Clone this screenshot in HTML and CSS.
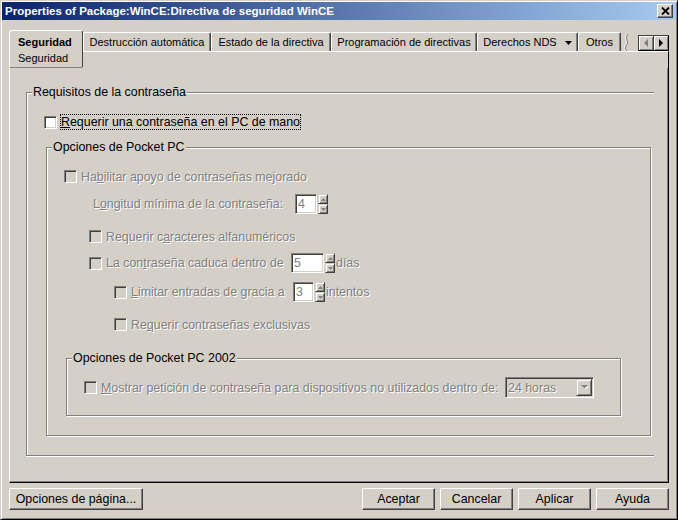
FILE: index.html
```html
<!DOCTYPE html>
<html>
<head>
<meta charset="utf-8">
<link rel="stylesheet" href="styles.css">
</head>
<body>
<div class="window">
  <div class="titlebar">
    <span class="title">Properties of Package:WinCE:Directiva de seguridad WinCE</span>
    <span class="close"><svg width="9" height="8" viewBox="0 0 9 8"><path d="M1 0.5 L8 7.5 M8 0.5 L1 7.5" stroke="#000" stroke-width="1.8" fill="none"/></svg></span>
  </div>

  <div class="tabarea">
    <div class="tab-sel">
      <div class="tab-sel-main">Seguridad</div>
      <div class="tab-sel-sub">Seguridad</div>
    </div>
    <div class="tab-rest">
      <div class="tab-row">
        <div class="tab t-dest">Destrucción automática</div>
        <div class="tab t-estado">Estado de la directiva</div>
        <div class="tab t-prog">Programación de directivas</div>
        <div class="tab t-nds">Derechos NDS<svg class="nds-arrow" width="7" height="4" viewBox="0 0 7 4"><polygon points="0,0 7,0 3.5,4" fill="#000"/></svg></div>
        <div class="tab t-otros">Otros</div>
        <div class="tab-partial"><svg width="12" height="19" viewBox="0 0 12 19"><path d="M6 1 Q3 4 5 7 Q7 10 4 13 Q2 16 5 18" stroke="#fff" stroke-width="1" fill="none"/><path d="M7 1 Q4 4 6 7 Q8 10 5 13 Q3 16 6 18" stroke="#808080" stroke-width="1" fill="none"/></svg></div>
        <div class="scroller">
          <span class="sbtn sbtn-left"><svg width="5" height="8" viewBox="0 0 5 8"><polygon points="4,0 0,4 4,8" fill="#808080"/></svg></span>
          <span class="sbtn"><svg width="5" height="8" viewBox="0 0 5 8"><polygon points="0,0 4,4 0,8" fill="#000"/></svg></span>
        </div>
      </div>
      <div class="tab-fill"></div>
    </div>
  </div>

  <div class="panel">
    <div class="group group-main">
      <div class="group-title">Requisitos de la contraseña</div>
      <div class="row row-main">
        <span class="cb"></span>
        <span class="focus"><u>R</u>equerir una contraseña en el PC de mano</span>
      </div>

      <div class="group group-ppc">
        <div class="group-title">Opciones de Pocket PC</div>

        <div class="row r1">
          <span class="cb cb-dis"></span>
          <span class="lbl dis">Ha<u>b</u>ilitar apoyo de contraseñas mejorado</span>
        </div>

        <div class="row r2">
          <span class="dis w-long">L<u>o</u>ngitud mínima de la contraseña:</span>
          <span class="field f-22">4</span>
          <span class="spin"><span class="sb"><svg width="5" height="3" viewBox="0 0 5 3"><polygon points="2.5,0 5,3 0,3" fill="#808080"/></svg></span><span class="sb"><svg width="5" height="3" viewBox="0 0 5 3"><polygon points="0,0 5,0 2.5,3" fill="#808080"/></svg></span></span>
        </div>

        <div class="row r3">
          <span class="cb cb-dis"></span>
          <span class="lbl dis">Requerir c<u>a</u>racteres alfanuméricos</span>
        </div>

        <div class="row r4">
          <span class="cb cb-dis"></span>
          <span class="lbl dis w-caduca">La con<u>t</u>raseña caduca dentro de</span>
          <span class="field f-33">5</span>
          <span class="spin"><span class="sb"><svg width="5" height="3" viewBox="0 0 5 3"><polygon points="2.5,0 5,3 0,3" fill="#808080"/></svg></span><span class="sb"><svg width="5" height="3" viewBox="0 0 5 3"><polygon points="0,0 5,0 2.5,3" fill="#808080"/></svg></span></span>
          <span class="dis after">días</span>
        </div>

        <div class="row r5">
          <span class="cb cb-dis"></span>
          <span class="lbl dis w-gracia"><u>L</u>imitar entradas de gracia a</span>
          <span class="field f-21">3</span>
          <span class="spin"><span class="sb"><svg width="5" height="3" viewBox="0 0 5 3"><polygon points="2.5,0 5,3 0,3" fill="#808080"/></svg></span><span class="sb"><svg width="5" height="3" viewBox="0 0 5 3"><polygon points="0,0 5,0 2.5,3" fill="#808080"/></svg></span></span>
          <span class="dis after">intentos</span>
        </div>

        <div class="row r6">
          <span class="cb cb-dis"></span>
          <span class="lbl dis">Re<u>q</u>uerir contraseñas exclusivas</span>
        </div>

        <div class="group group-2002">
          <div class="group-title">Opciones de Pocket PC 2002</div>
          <div class="row r7">
            <span class="cb cb-dis"></span>
            <span class="lbl dis w-mostrar"><u>M</u>ostrar petición de contraseña para dispositivos no utilizados dentro de:</span>
            <span class="combo">
              <span class="dis combo-text">24 horas</span>
              <span class="combo-btn"><svg width="7" height="5" viewBox="0 0 7 5"><polygon points="1,1 8,1 4.5,4.5" fill="#fff"/><polygon points="0,0 7,0 3.5,3.5" fill="#808080"/></svg></span>
            </span>
          </div>
        </div>
      </div>
    </div>
  </div>

  <div class="buttons">
    <span class="btn btn-opts">Opciones de página...</span>
    <div class="btn-group">
      <span class="btn btn-r">Aceptar</span>
      <span class="btn btn-r">Cancelar</span>
      <span class="btn btn-r">Aplicar</span>
      <span class="btn btn-r">Ayuda</span>
    </div>
  </div>
</div>
</body>
</html>
```
FILE: styles.css
```css
html, body {
  margin: 0;
  padding: 0;
  background: #d4d0c8;
}
body {
  font-family: "Liberation Sans", Arial, sans-serif;
  font-size: 12.4px;
  line-height: 14px;
  color: #000;
  overflow: hidden;
}
.window {
  width: 678px;
  height: 520px;
  box-sizing: border-box;
  border: 1px solid;
  border-color: #d4d0c8 #000 #000 #d4d0c8;
  box-shadow: inset 1px 1px 0 #fff, inset -1px -1px 0 #808080;
  padding: 1px;
  background: #d4d0c8;
}
.titlebar {
  height: 18px;
  display: flex;
  align-items: center;
  justify-content: space-between;
  background: linear-gradient(to right, #0a246a, #a6caf0);
  padding: 0 3px 0 3px;
}
.title {
  color: #fff;
  font-weight: bold;
  font-size: 11.5px;
  line-height: 14px;
}
.close {
  width: 16px;
  height: 14px;
  box-sizing: border-box;
  border: 1px solid;
  border-color: #fff #404040 #404040 #fff;
  box-shadow: inset -1px -1px 0 #808080;
  background: #d4d0c8;
  display: flex;
  align-items: center;
  justify-content: center;
}
.close svg { display: block; }

/* Tabs */
.tabarea {
  display: flex;
  margin: 10px 0 0 7px;
  font-size: 11px;
  line-height: 13px;
}
.tab-sel {
  width: 74px;
  height: 38px;
  box-sizing: border-box;
  border: 1px solid;
  border-color: #fff #404040 #808080 #fff;
  border-radius: 3px 3px 2px 0;
  padding: 5px 0 0 8px;
}
.tab-sel-main { font-weight: bold; }
.tab-sel-sub { margin-top: 3px; }
.tab-rest {
  width: 586px;
  display: flex;
  flex-direction: column;
}
.tab-row {
  height: 21px;
  display: flex;
  align-items: flex-end;
}
.tab {
  height: 19px;
  box-sizing: border-box;
  border: 1px solid;
  border-bottom: none;
  border-color: #fff #404040 transparent #fff;
  box-shadow: inset -1px 0 0 #808080;
  border-radius: 2px 2px 0 0;
  padding-top: 3px;
  display: flex;
  justify-content: center;
  white-space: nowrap;
}
.t-dest { width: 128px; }
.t-estado { width: 120px; }
.t-prog { width: 146px; }
.t-nds { width: 101px; }
.t-otros { width: 43px; }
.nds-arrow { margin: 5px 0 0 8px; display: block; }
.tab-partial {
  width: 12px;
  height: 18px;
}
.tab-partial svg { display: block; }
.scroller {
  margin-left: 5px;
  width: 31px;
  height: 16px;
  box-sizing: border-box;
  border: 1px solid;
  border-color: #404040 #000 #000 #404040;
  display: flex;
  margin-bottom: 0;
}
.sbtn {
  width: 14px;
  height: 14px;
  box-sizing: border-box;
  box-shadow: inset 1px 1px 0 #fff, inset -1px -1px 0 #808080;
  display: flex;
  align-items: center;
  justify-content: center;
}
.sbtn-left { border-right: 1px solid #404040; width: 15px; }
.sbtn svg { display: block; }
.tab-fill {
  height: 17px;
  box-sizing: border-box;
  border-top: 1px solid #fff;
  border-right: 1px solid #000;
}

/* Panel */
.panel {
  width: 660px;
  height: 415px;
  box-sizing: border-box;
  margin-left: 7px;
  border-left: 1px solid #fff;
  border-right: 1px solid #000;
  border-bottom: 1px solid #000;
  box-shadow: inset -1px -1px 0 #808080;
  padding: 24px 0 0 16px;
}
.group {
  box-sizing: border-box;
  border: 1px solid #808080;
}
.group-main {
  width: 628px;
  height: 364px;
  border-right: none;
  box-shadow: inset 1px 1px 0 #fff, 0 1px 0 #fff;
}
.group-ppc {
  width: 605px;
  height: 289px;
  margin: 17px 0 0 19px;
  box-shadow: inset 1px 1px 0 #fff, 1px 1px 0 #fff;
}
.group-2002 {
  width: 555px;
  height: 58px;
  margin: 27px 0 0 19px;
  box-shadow: inset 1px 1px 0 #fff, 1px 1px 0 #fff;
}
.group-title {
  width: max-content;
  height: 14px;
  line-height: 14px;
  margin: -8px 0 0 5px;
  padding: 0 1px;
  background: #d4d0c8;
}

.row {
  display: flex;
  align-items: center;
  white-space: nowrap;
}
.row-main { height: 16px; margin-top: 15px; padding-left: 17px; }
.r1 { height: 13px; margin-top: 16px; padding-left: 17px; }
.r2 { height: 20px; margin-top: 11px; padding-left: 46px; }
.r3 { height: 13px; margin-top: 16px; padding-left: 42px; }
.r4 { height: 20px; margin-top: 10px; padding-left: 42px; }
.r5 { height: 20px; margin-top: 9px; padding-left: 67px; }
.r6 { height: 13px; margin-top: 16px; padding-left: 67px; }
.r7 { height: 21px; margin-top: 12px; padding-left: 17px; }

.cb {
  width: 13px;
  height: 13px;
  flex: none;
  box-sizing: border-box;
  border: 1px solid;
  border-color: #808080 #fff #fff #808080;
  box-shadow: inset 1px 1px 0 #404040, inset -1px -1px 0 #d4d0c8;
  background: #fff;
}
.cb-dis { background: #d4d0c8; }
.focus {
  margin-left: 3px;
  border: 1px dotted #000;
  line-height: 14px;
}
.lbl { margin-left: 4px; }
.dis {
  color: #808080;
  text-shadow: 1px 1px 0 #fff;
}
.w-long { width: 202px; }
.w-caduca { width: 185px; }
.w-gracia { width: 162px; }
.w-mostrar { width: 404px; }
.after { margin-left: 1px; }

.field {
  height: 20px;
  box-sizing: border-box;
  border: 1px solid;
  border-color: #808080 #fff #fff #808080;
  box-shadow: inset 1px 1px 0 #404040, inset -1px -1px 0 #d4d0c8;
  background: #fff;
  color: #808080;
  padding: 2px 0 0 2px;
  line-height: 15px;
}
.f-22 { width: 22px; }
.f-33 { width: 33px; }
.f-21 { width: 21px; }
.spin {
  width: 10px;
  height: 20px;
  margin-left: 1px;
  display: flex;
  flex-direction: column;
}
.sb {
  height: 10px;
  box-sizing: border-box;
  border: 1px solid;
  border-color: #d4d0c8 #404040 #404040 #d4d0c8;
  box-shadow: inset 1px 1px 0 #fff, inset -1px -1px 0 #808080;
  display: flex;
  align-items: center;
  justify-content: center;
}
.sb svg { display: block; }

.combo {
  width: 89px;
  height: 21px;
  box-sizing: border-box;
  border: 1px solid;
  border-color: #808080 #fff #fff #808080;
  box-shadow: inset 1px 1px 0 #404040, inset -1px -1px 0 #d4d0c8;
  background: #d4d0c8;
  padding: 1px;
  display: flex;
  align-items: center;
  justify-content: space-between;
}
.combo-text { padding-left: 1px; }
.combo-btn {
  width: 16px;
  height: 17px;
  box-sizing: border-box;
  border: 1px solid;
  border-color: #d4d0c8 #404040 #404040 #d4d0c8;
  box-shadow: inset 1px 1px 0 #fff, inset -1px -1px 0 #808080;
  display: flex;
  align-items: center;
  justify-content: center;
}
.combo-btn svg { display: block; }

/* Bottom buttons */
.buttons {
  display: flex;
  justify-content: space-between;
  width: 660px;
  margin: 5px 0 0 7px;
}
.btn-group {
  display: flex;
  gap: 5px;
}
.btn {
  height: 22px;
  box-sizing: border-box;
  border: 1px solid;
  border-color: #fff #404040 #404040 #fff;
  box-shadow: inset -1px -1px 0 #808080;
  display: flex;
  align-items: center;
  justify-content: center;
  white-space: nowrap;
}
.btn-opts { width: 134px; }
.btn-r { width: 73px; }
```
